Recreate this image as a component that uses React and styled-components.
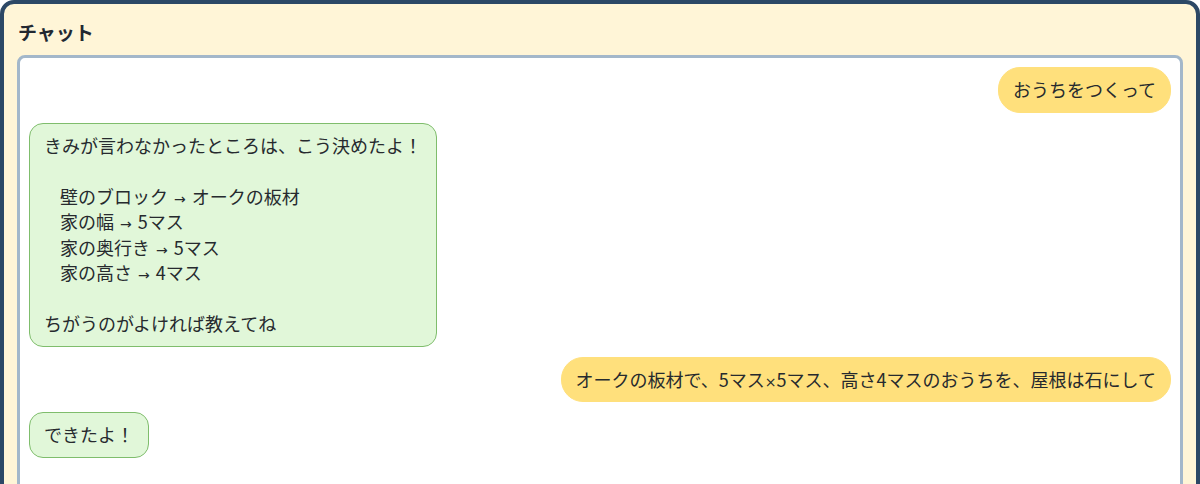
import React from "react";
import styled, { createGlobalStyle } from "styled-components";

const GlobalStyle = createGlobalStyle`
  html, body {
    margin: 0;
    padding: 0;
    overflow: hidden;
    background: #ffffff;
  }
  body {
    font-family: "Noto Sans CJK JP", "Noto Sans", sans-serif;
  }
`;

const messages = [
  { from: "user", lines: ["おうちをつくって"] },
  {
    from: "bot",
    lines: [
      { text: "きみが言わなかったところは、こう決めたよ！" },
      { text: "" },
      { text: "壁のブロック → オークの板材", indent: true },
      { text: "家の幅 → 5マス", indent: true },
      { text: "家の奥行き → 5マス", indent: true },
      { text: "家の高さ → 4マス", indent: true },
      { text: "" },
      { text: "ちがうのがよければ教えてね" },
    ],
  },
  {
    from: "user",
    lines: ["オークの板材で、5マス×5マス、高さ4マスのおうちを、屋根は石にして"],
  },
  { from: "bot", lines: ["できたよ！"] },
];

// arrows and × are drawn smaller than the CJK glyphs in the reference
const renderText = (text) =>
  text.split(/([→×])/).map((part, k) =>
    part === "→" || part === "×" ? (
      <Sym key={k} $tight={part === "×"}>
        {part}
      </Sym>
    ) : (
      part
    )
  );

export default function App() {
  return (
    <>
      <GlobalStyle />
      <Panel>
        <Title>チャット</Title>
        <ChatBox>
          {messages.map((m, i) => (
            <Row key={i} $user={m.from === "user"}>
              <Bubble $user={m.from === "user"}>
                {m.lines.map((l, j) => {
                  const line = typeof l === "string" ? { text: l } : l;
                  return (
                    <Line key={j} $indent={line.indent}>
                      {line.text ? renderText(line.text) : "\u00a0"}
                    </Line>
                  );
                })}
              </Bubble>
            </Row>
          ))}
        </ChatBox>
      </Panel>
    </>
  );
}

const Panel = styled.div`
  box-sizing: border-box;
  height: calc(100vh + 24px);
  display: flex;
  flex-direction: column;
  background: #fff5d7;
  border: 4px solid #2c4866;
  border-radius: 14px;
  padding: 14px 13px 0 13px;
`;

const Title = styled.h2`
  margin: 0 0 9px 1px;
  font-size: 19px;
  line-height: 28px;
  font-weight: 700;
  color: #222831;
`;

const ChatBox = styled.div`
  flex: 1;
  display: flex;
  flex-direction: column;
  gap: 10px;
  padding: 9px 9px;
  background: #ffffff;
  border: 3px solid #a3b7ca;
  border-radius: 8px;
`;

const Row = styled.div`
  display: flex;
  justify-content: ${({ $user }) => ($user ? "flex-end" : "flex-start")};
`;

const Bubble = styled.div`
  padding: 9px 14px;
  font-size: 18px;
  line-height: 25.5px;
  color: #262a2e;
  border-radius: ${({ $user }) => ($user ? "22px" : "14px")};
  background: ${({ $user }) => ($user ? "#ffe07c" : "#e1f7d9")};
  border: 1px solid ${({ $user }) => ($user ? "#ffe07c" : "#7fbd6c")};
`;

const Line = styled.div`
  white-space: pre-wrap;
  padding-left: ${({ $indent }) => ($indent ? "16px" : "0")};
`;

const Sym = styled.span`
  font-family: "DejaVu Sans", sans-serif;
  font-size: 14px;
  line-height: 1;
  margin: ${({ $tight }) => ($tight ? "0" : "0 2px")};
`;
